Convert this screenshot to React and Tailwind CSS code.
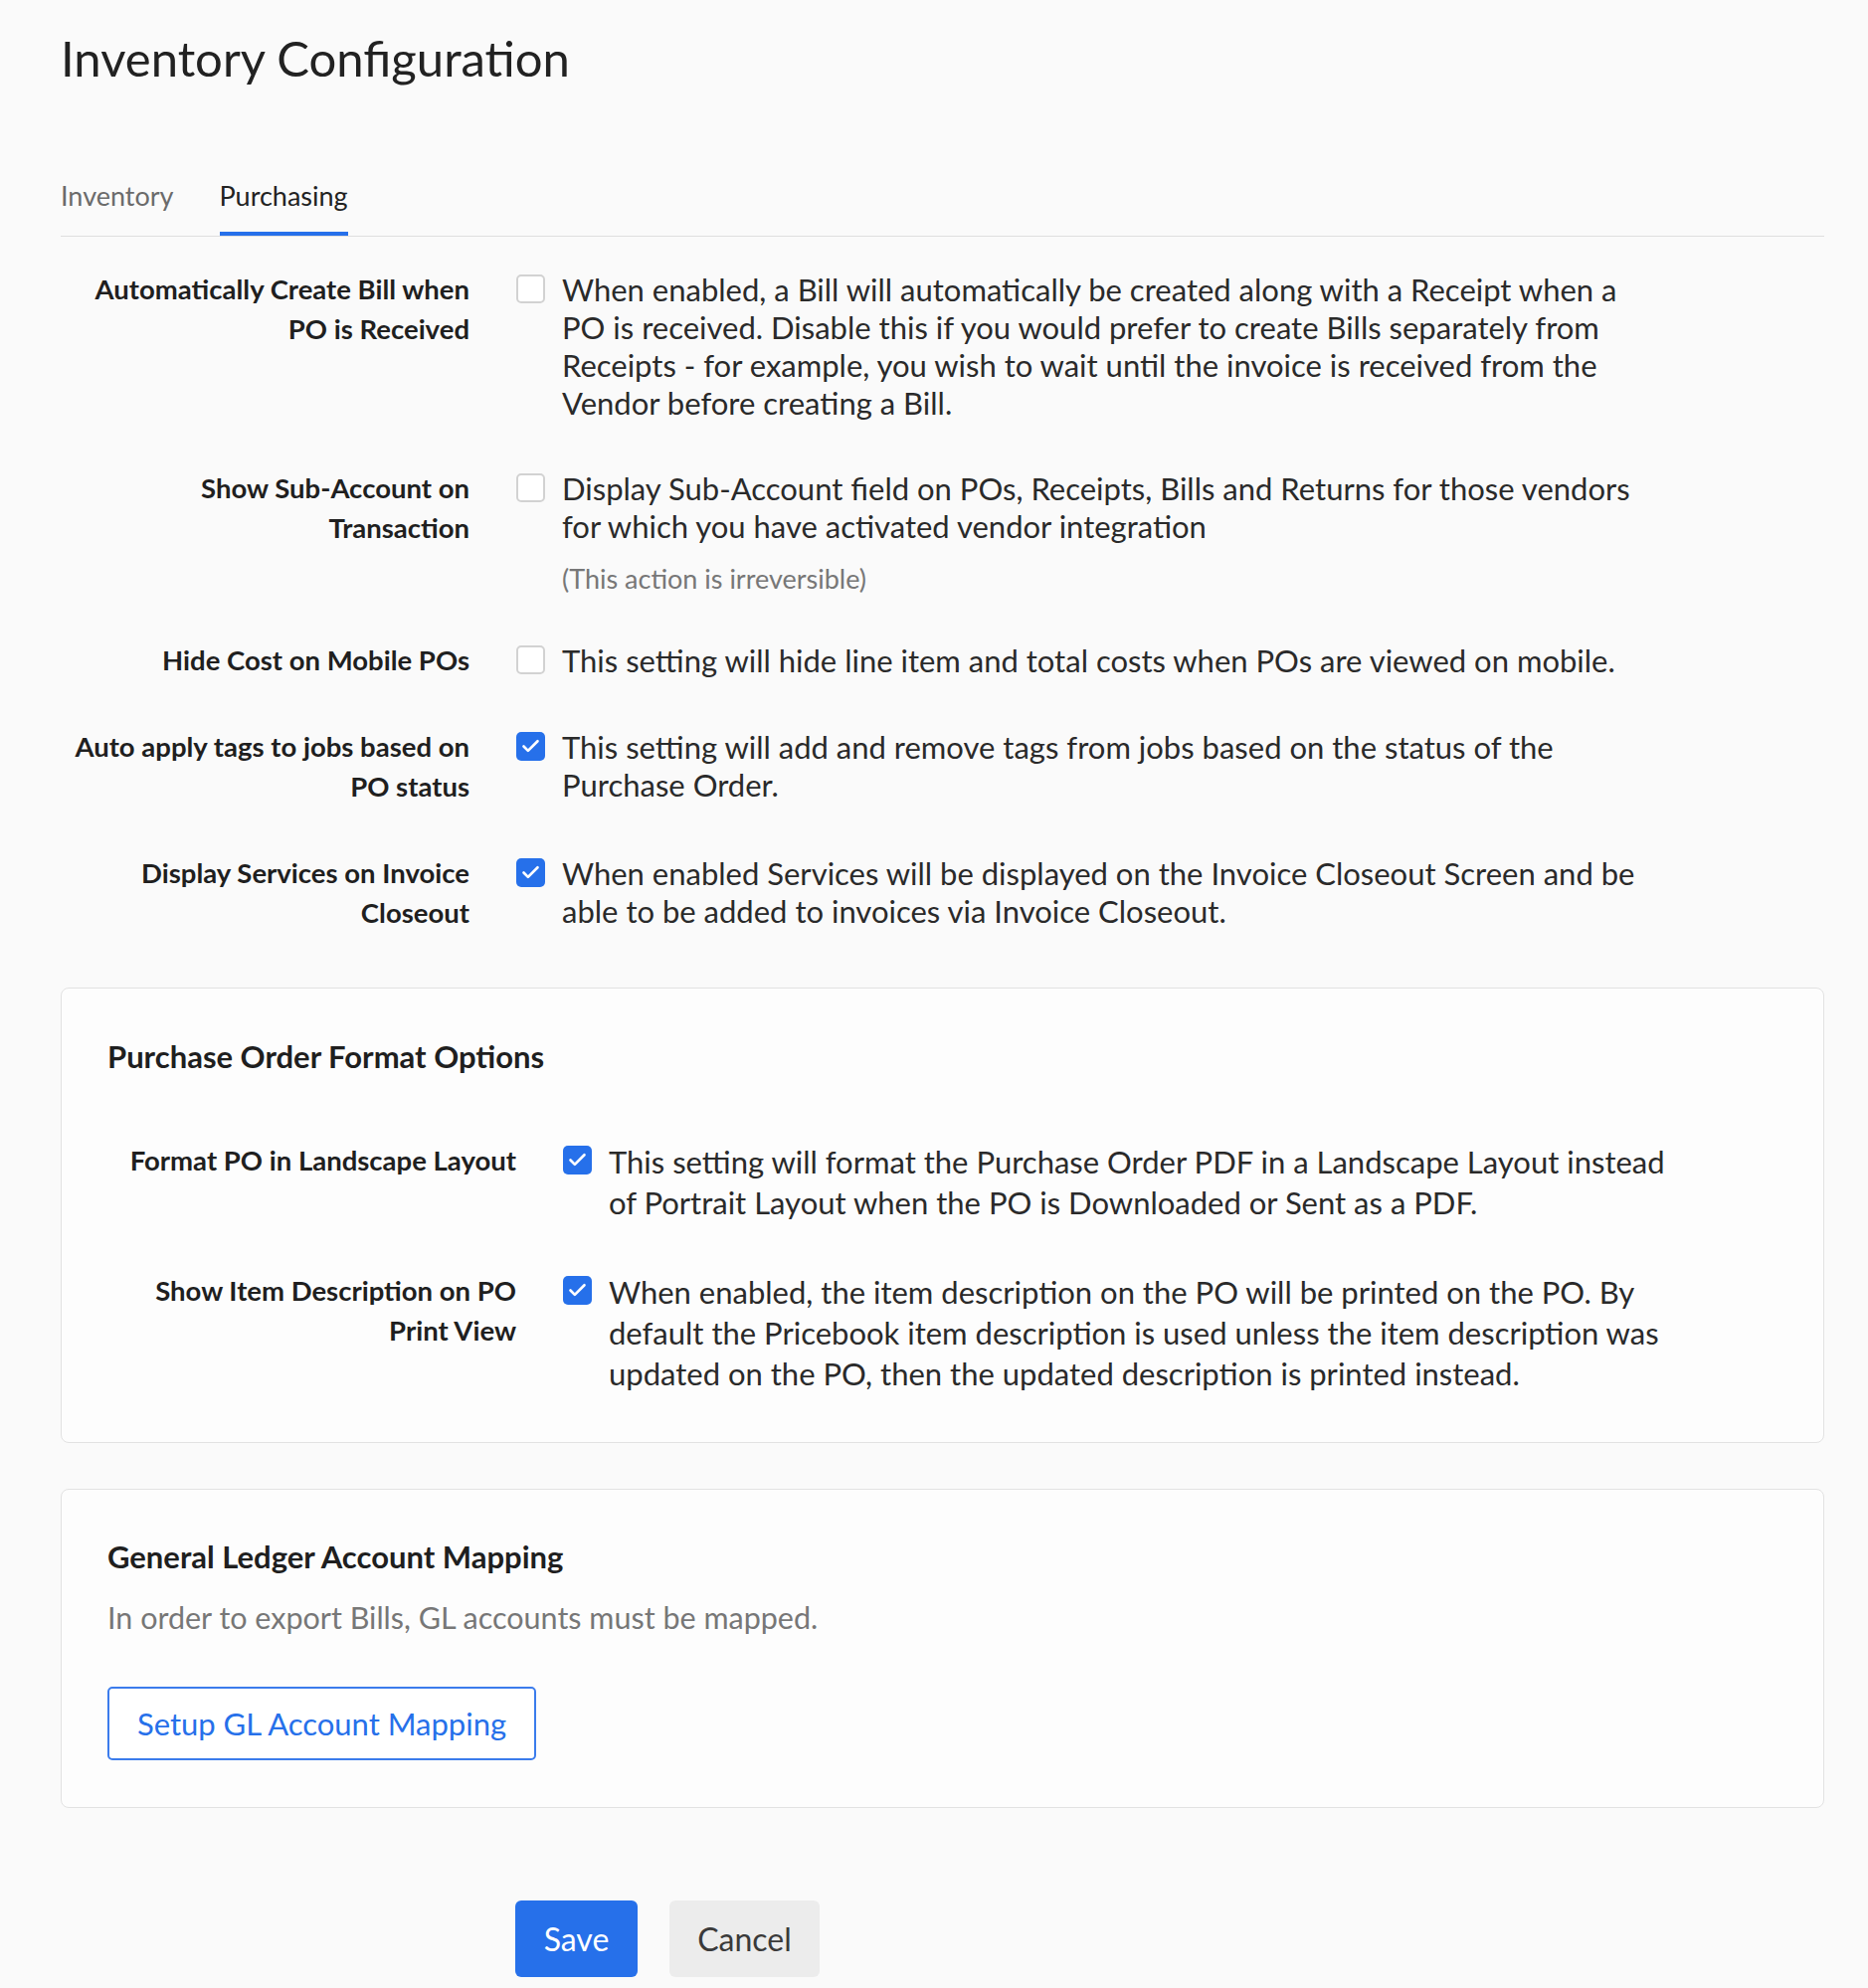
import { Check } from "lucide-react";

const generalRows = [
  {
    id: 1,
    label: ["Automatically Create Bill when", "PO is Received"],
    desc: [
      "When enabled, a Bill will automatically be created along with a Receipt when a",
      "PO is received. Disable this if you would prefer to create Bills separately from",
      "Receipts - for example, you wish to wait until the invoice is received from the",
      "Vendor before creating a Bill.",
    ],
    checked: false,
  },
  {
    id: 2,
    label: ["Show Sub-Account on", "Transaction"],
    desc: [
      "Display Sub-Account field on POs, Receipts, Bills and Returns for those vendors",
      "for which you have activated vendor integration",
    ],
    note: "(This action is irreversible)",
    checked: false,
  },
  {
    id: 3,
    label: ["Hide Cost on Mobile POs"],
    desc: ["This setting will hide line item and total costs when POs are viewed on mobile."],
    checked: false,
  },
  {
    id: 4,
    label: ["Auto apply tags to jobs based on", "PO status"],
    desc: [
      "This setting will add and remove tags from jobs based on the status of the",
      "Purchase Order.",
    ],
    checked: true,
  },
  {
    id: 5,
    label: ["Display Services on Invoice", "Closeout"],
    desc: [
      "When enabled Services will be displayed on the Invoice Closeout Screen and be",
      "able to be added to invoices via Invoice Closeout.",
    ],
    checked: true,
  },
];

const formatRows = [
  {
    id: 1,
    label: ["Format PO in Landscape Layout"],
    desc: [
      "This setting will format the Purchase Order PDF in a Landscape Layout instead",
      "of Portrait Layout when the PO is Downloaded or Sent as a PDF.",
    ],
    checked: true,
  },
  {
    id: 2,
    label: ["Show Item Description on PO", "Print View"],
    desc: [
      "When enabled, the item description on the PO will be printed on the PO. By",
      "default the Pricebook item description is used unless the item description was",
      "updated on the PO, then the updated description is printed instead.",
    ],
    checked: true,
  },
];

const Box = ({ checked }) =>
  checked ? (
    <span className="mt-[5px] flex h-[29px] w-[29px] shrink-0 items-center justify-center rounded-[5px] bg-[#2670ea]">
      <Check className="h-[21px] w-[21px] text-white" strokeWidth={3} />
    </span>
  ) : (
    <span className="mt-[5px] h-[29px] w-[29px] shrink-0 rounded-[5px] border-2 border-[#d2d2d2] bg-white" />
  );

const Row = ({ row, lh }) => (
  <div className="flex items-start">
    <div className="w-[411px] shrink-0 text-right text-[27.5px] font-bold leading-[40px] text-[#1f1f1f]">
      {row.label.map((l) => (
        <div key={l} className="whitespace-nowrap">{l}</div>
      ))}
    </div>
    <div className="ml-[47px] flex items-start gap-[17px]">
      <Box checked={row.checked} />
      <div className="pt-[1px]">
        <div className={`text-[31px] text-[#2a2a2a] ${lh}`}>
          {row.desc.map((d) => (
            <div key={d} className="whitespace-nowrap">{d}</div>
          ))}
        </div>
        {row.note && (
          <div className="mt-[19px] text-[27px] leading-[30px] text-[#777777]">{row.note}</div>
        )}
      </div>
    </div>
  </div>
);

const App = () => {
  return (
    <div className="min-h-screen bg-[#fafafa] font-['Lato',sans-serif] text-[#222]">
      <div className="pl-[61px] pr-[44px] pt-[30px] pb-[10px]">
        <h1 className="text-[49px] leading-[56px] text-[#222]">Inventory Configuration</h1>

        <div className="mt-[95px] flex gap-[46px] border-b-[1.5px] border-[#dedede]">
          <div className="pb-[24px] text-[27px] leading-[32px] text-[#6b6b6b]">Inventory</div>
          <div className="border-b-4 border-[#2670ea] pb-[20px] text-[27px] leading-[32px] text-[#222]">Purchasing</div>
        </div>

        <div className="mt-[33px] flex flex-col gap-[47px]">
          {generalRows.map((row) => (
            <Row key={row.id} row={row} lh="leading-[38px]" />
          ))}
        </div>

        <div className="mt-[55px] rounded-[8px] border-[1.5px] border-[#e2e2e2] bg-[#fdfdfd] px-[46px] pt-[50px] pb-[48px]">
          <h2 className="text-[31px] font-bold leading-[36px] text-[#1f1f1f]">Purchase Order Format Options</h2>
          <div className="mt-[67px] flex flex-col gap-[48px]">
            {formatRows.map((row) => (
              <Row key={row.id} row={row} lh="leading-[41px]" />
            ))}
          </div>
        </div>

        <div className="mt-[46px] rounded-[8px] border-[1.5px] border-[#e2e2e2] bg-[#fdfdfd] px-[46px] pt-[49px] pb-[47px]">
          <h2 className="text-[31px] font-bold leading-[36px] text-[#1f1f1f]">General Ledger Account Mapping</h2>
          <p className="mt-[24px] text-[30.5px] leading-[38px] text-[#777777]">
            In order to export Bills, GL accounts must be mapped.
          </p>
          <button className="mt-[51px] flex h-[74px] w-[431px] items-center justify-center rounded-[5px] border-2 border-[#3b7cec] bg-white text-[31px] text-[#2670ea]">
            Setup GL Account Mapping
          </button>
        </div>

        <div className="mt-[93px] ml-[457px] flex gap-[32px]">
          <button className="h-[77px] w-[123px] rounded-[6px] bg-[#2670ea] text-[32px] text-white">Save</button>
          <button className="h-[77px] w-[151px] rounded-[6px] bg-[#ececec] text-[32px] text-[#3a3a3a]">Cancel</button>
        </div>
      </div>
    </div>
  );
};

export default App;
